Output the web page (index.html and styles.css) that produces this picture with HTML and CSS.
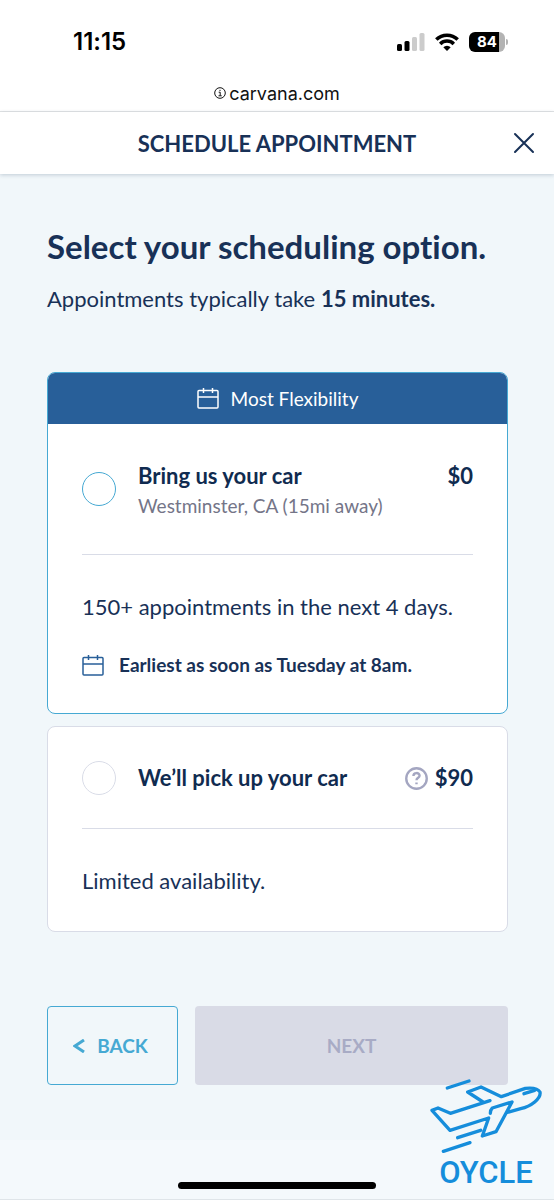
FILE: index.html
```html
<!DOCTYPE html>
<html lang="en">
<head>
<meta charset="utf-8">
<meta name="viewport" content="width=device-width, initial-scale=1">
<title>Schedule Appointment</title>
<link rel="stylesheet" href="styles.css">
</head>
<body>
<div class="status-bar">
  <span class="clock">11:15</span>
  <div class="indicators">
    <svg class="signal" viewBox="0 0 28 18" aria-hidden="true">
      <rect x="0" y="11" width="5" height="7" rx="1.5"/>
      <rect x="7.5" y="8" width="5" height="10" rx="1.5"/>
      <rect class="dim" x="15" y="4" width="5" height="14" rx="1.5"/>
      <rect class="dim" x="22.5" y="0" width="5" height="18" rx="1.5"/>
    </svg>
    <svg class="wifi" viewBox="0 0 24 18" aria-hidden="true">
      <path d="M1.300 6.600a15.200 15.200 0 0 1 21.400 0M5.200 10.900a9.700 9.700 0 0 1 13.600 0"/>
      <path class="dot" d="M12 18l-3.700-3.800a5.300 5.300 0 0 1 7.400 0z"/>
    </svg>
    <div class="battery"><span class="battery-level">84</span></div>
  </div>
</div>
<div class="address-bar">
  <svg class="info-icon" viewBox="0 0 12 12" aria-hidden="true">
    <circle cx="6" cy="6" r="5.300"/>
    <path d="M4.700 5.200h1.500v3.500M4.500 8.800h3.200M6 2.800v1.200"/>
  </svg>
  <span>carvana.com</span>
</div>
<header class="header">
  <h1 class="header-title">SCHEDULE APPOINTMENT</h1>
  <button class="close" type="button" aria-label="Close">
    <svg viewBox="0 0 22 22" aria-hidden="true"><path d="M2 2l18 18M20 2L2 20"/></svg>
  </button>
</header>
<main class="main">
  <h2 class="title">Select your scheduling option.</h2>
  <p class="intro">Appointments typically take <strong>15 minutes.</strong></p>
  <form>
    <div class="options">
      <section class="card card-featured">
        <div class="banner">
          <svg class="calendar" viewBox="0 0 22 21" aria-hidden="true"><rect x="1" y="2.500" width="20" height="17.500" rx="1"/><path d="M1 9h20M6.500 0v5M15.500 0v5"/></svg>
          <span>Most Flexibility</span>
        </div>
        <div class="card-body">
          <div class="option">
            <input class="radio" type="radio" name="option" id="drop-off">
            <label class="option-label" for="drop-off">
              <span class="option-name">Bring us your car</span>
              <span class="option-place">Westminster, CA (15mi away)</span>
            </label>
            <span class="price">$0</span>
          </div>
          <p class="detail">150+ appointments in the next 4 days.</p>
          <p class="earliest">
            <svg class="calendar" viewBox="0 0 22 21" aria-hidden="true"><rect x="1" y="2.500" width="20" height="17.500" rx="1"/><path d="M1 9h20M6.500 0v5M15.500 0v5"/></svg>
            <span>Earliest as soon as Tuesday at 8am.</span>
          </p>
        </div>
      </section>
      <section class="card">
        <div class="card-body">
          <div class="option">
            <input class="radio" type="radio" name="option" id="pick-up">
            <label class="option-label" for="pick-up">
              <span class="option-name">We’ll pick up your car</span>
            </label>
            <button class="help" type="button" aria-label="About the pick-up fee">
              <svg viewBox="0 0 24 24" aria-hidden="true">
                <circle cx="12" cy="12" r="10.700"/>
                <path d="M8.800 9.300c0-3.900 6.400-3.900 6.400-.3 0 2.300-3.200 2.200-3.200 4.800M12 16.100v2"/>
              </svg>
            </button>
            <span class="price">$90</span>
          </div>
          <p class="detail">Limited availability.</p>
        </div>
      </section>
    </div>
    <div class="actions">
      <button class="button back" type="button">
        <svg class="chevron" viewBox="0 0 12 14" aria-hidden="true"><path d="M11 1L2 7l9 6"/></svg>
        <span>BACK</span>
      </button>
      <button class="button next" type="submit" disabled>NEXT</button>
    </div>
  </form>
</main>
<footer class="footer">
  <div class="home-indicator"></div>
  <div class="brand">
    <svg class="plane" viewBox="48 52 336 222" aria-hidden="true">
      <path d="M100 79L165 58M131 228L200 206M88 269L168 243M228 117L109 155L72 139L54 146L108 206L224 169L205 223L246 210L294 121L235 139Q229 145 229 155M207 121L161 91L201 76L262 105L334 80Q369 76 378 91C382 111 351 134 320 141L280 152M330 96L362 86"/>
    </svg>
    <span class="brand-name">OYCLE</span>
  </div>
</footer>
</body>
</html>
```
FILE: styles.css
```css
:root {
  --navy: #183157;
  --sky: #46a9d3;
  --blue: #285f99;
  --line: #d9dce7;
  --page: #f1f7fa;
}

* {
  box-sizing: border-box;
}

body {
  display: flex;
  flex-direction: column;
  min-height: 100vh;
  margin: 0;
  background: var(--page);
  color: var(--navy);
  font-family: Lato, "Open Sans", sans-serif;
  font-variant-ligatures: none;
}

h1, h2, p {
  margin: 0;
}

button {
  padding: 0;
  border: 0;
  background: none;
  color: inherit;
  font: inherit;
}

svg {
  display: block;
  flex: none;
  fill: none;
  stroke: currentColor;
}

.status-bar {
  display: flex;
  align-items: center;
  justify-content: space-between;
  height: 83px;
  padding: 0 49px 0 73px;
  background: #fff;
  color: #000;
  font-family: Inter, sans-serif;
}

.clock {
  font-size: 24px;
  font-weight: 600;
}

.indicators {
  display: flex;
  align-items: center;
  gap: 10px;
}

.signal {
  width: 28px;
  height: 18px;
  fill: currentColor;
  stroke: none;
}

.signal .dim {
  fill: #ccc;
}

.wifi {
  width: 24px;
  height: 18px;
  stroke-width: 3.5;
}

.wifi .dot {
  fill: currentColor;
  stroke: none;
}

.battery {
  position: relative;
  width: 36px;
  border-radius: 6px;
  background: linear-gradient(90deg, #000 30px, #b3b3b3 30px);
}

.battery::after {
  position: absolute;
  top: 7px;
  right: -3px;
  width: 2px;
  height: 6px;
  border-radius: 0 2px 2px 0;
  background: #b3b3b3;
  content: "";
}

.battery-level {
  display: block;
  color: #fff;
  font-size: 15px;
  font-weight: 700;
  line-height: 20px;
  text-align: center;
}

.address-bar {
  display: flex;
  align-items: center;
  justify-content: center;
  gap: 3px;
  height: 29px;
  padding-bottom: 8px;
  border-bottom: 1px solid #e3e5e6;
  background: #fff;
  color: #111;
  font-family: Inter, sans-serif;
  font-size: 18px;
}

.info-icon {
  width: 12px;
  height: 12px;
}

.header {
  display: grid;
  grid-template-columns: 40px 1fr 40px;
  align-items: center;
  height: 62px;
  padding: 0 10px;
  background: #fff;
  box-shadow: 0 1px 4px rgb(24 49 87 / 22%);
}

.header-title {
  grid-column: 2;
  font-size: 22px;
  font-weight: 700;
  text-align: center;
}

.close {
  display: grid;
  place-items: center;
  height: 40px;
}

.close svg {
  width: 22px;
  height: 22px;
  stroke-width: 2;
  stroke-linecap: round;
}

.main {
  flex: 1;
  padding: 51px 46px 55px 47px;
}

.title {
  font-size: 33px;
  font-weight: 700;
  line-height: 42px;
}

.intro {
  margin-top: 17px;
  font-size: 22px;
  line-height: 30px;
}

.options {
  display: grid;
  gap: 12px;
  margin-top: 58px;
}

.card {
  overflow: hidden;
  border: 1px solid var(--line);
  border-radius: 8px;
  background: #fff;
}

.card-featured {
  border-color: var(--sky);
}

.banner {
  display: flex;
  align-items: center;
  justify-content: center;
  gap: 12px;
  height: 51px;
  background: var(--blue);
  color: #fff;
  font-size: 19px;
}

.calendar {
  width: 22px;
  height: 21px;
  stroke-width: 1.5;
}

.card-body {
  padding: 34px 34px 35px;
}

.card-featured .card-body {
  padding-bottom: 33px;
}

.option {
  display: flex;
  align-items: center;
  padding-bottom: 33px;
  border-bottom: 1px solid var(--line);
}

.radio {
  flex: none;
  width: 34px;
  height: 34px;
  margin: 0 22px 0 0;
  border: 1px solid var(--line);
  border-radius: 50%;
  appearance: none;
}

.radio:checked {
  border-width: 10px;
}

.option-label {
  flex: 1;
}

.option-name,
.option-place {
  display: block;
  line-height: 30px;
}

.option-name,
.price {
  color: #102b50;
  font-size: 22px;
  font-weight: 700;
}

.option-place {
  color: #747588;
  font-size: 19px;
}

.price {
  line-height: 30px;
}

.card-featured .option {
  align-items: flex-start;
  padding-top: 3px;
}

.card-featured .radio {
  margin-top: 11px;
  border-color: var(--sky);
}

.help {
  margin-right: 7px;
  color: #a4a6c1;
}

.help svg {
  width: 23px;
  height: 23px;
  stroke-width: 2.5;
}

.detail {
  margin-top: 37px;
  font-size: 22px;
  line-height: 30px;
}

.earliest {
  display: flex;
  align-items: center;
  gap: 15px;
  margin-top: 28px;
  font-size: 19px;
  font-weight: 700;
  line-height: 30px;
}

.earliest .calendar {
  color: var(--blue);
}

.actions {
  display: grid;
  grid-template-columns: 131px 1fr;
  gap: 17px;
  margin-top: 74px;
}

.button {
  height: 79px;
  border-radius: 4px;
  font-size: 19px;
  font-weight: 700;
}

.back {
  display: flex;
  align-items: center;
  justify-content: center;
  gap: 12px;
  padding-right: 4px;
  border: 1px solid var(--sky);
  color: var(--sky);
}

.chevron {
  width: 12px;
  height: 14px;
  stroke-width: 3;
}

.next {
  background: #d9dbe6;
  color: #a8abc5;
}

.footer {
  position: relative;
  display: flex;
  align-items: flex-end;
  justify-content: center;
  height: 60px;
  padding-bottom: 10px;
  border-bottom: 1px solid #dfe5e9;
  background: #f4f9fc;
}

.home-indicator {
  width: 198px;
  height: 7px;
  border-radius: 4px;
  background: #000;
}

.brand {
  position: absolute;
  right: 12px;
  bottom: 6px;
  display: grid;
  justify-items: center;
  color: #158ddb;
}

.plane {
  width: 112px;
  height: 74px;
  stroke-width: 10;
  stroke-linecap: round;
  stroke-linejoin: round;
}

.brand-name {
  font-family: Roboto, sans-serif;
  font-size: 31px;
  font-weight: 500;
  line-height: 40px;
}
```
